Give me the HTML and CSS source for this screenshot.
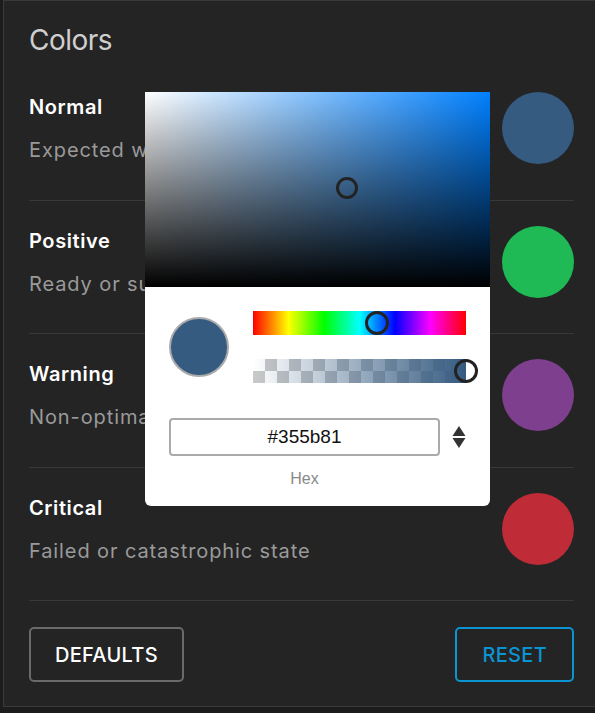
FILE: index.html
```html
<!DOCTYPE html>
<html>
<head>
<meta charset="utf-8">
<link rel="stylesheet" href="styles.css">
</head>
<body>
<div class="stage">
  <div class="dialog">
    <h1 class="title">Colors</h1>
    <div class="row">
      <div class="text">
        <div class="label">Normal</div>
        <div class="desc">Expected working state</div>
      </div>
      <div class="swatch normal"></div>
    </div>
    <div class="row">
      <div class="text">
        <div class="label">Positive</div>
        <div class="desc">Ready or successful state</div>
      </div>
      <div class="swatch positive"></div>
    </div>
    <div class="row">
      <div class="text">
        <div class="label">Warning</div>
        <div class="desc">Non-optimal state</div>
      </div>
      <div class="swatch warning"></div>
    </div>
    <div class="row">
      <div class="text">
        <div class="label">Critical</div>
        <div class="desc">Failed or catastrophic state</div>
      </div>
      <div class="swatch critical"></div>
    </div>
    <div class="footer">
      <button class="btn btn-default">DEFAULTS</button>
      <button class="btn btn-reset">RESET</button>
    </div>
  </div>

  <div class="picker">
    <div class="saturation">
      <div class="sat-pointer"></div>
    </div>
    <div class="picker-body">
      <div class="controls">
        <div class="preview"></div>
        <div class="sliders">
          <div class="hue"><div class="thumb hue-thumb"></div></div>
          <div class="alpha"><div class="alpha-fill"></div><div class="thumb alpha-thumb"></div></div>
        </div>
      </div>
      <div class="fields">
        <div class="field">
          <div class="hex-input">#355b81</div>
          <div class="hex-label">Hex</div>
        </div>
        <svg class="toggle" width="14" height="24" viewBox="0 0 14 24">
          <path d="M7 1 L13.5 11 L0.5 11 Z" fill="#333"/>
          <path d="M0.5 13 L13.5 13 L7 23 Z" fill="#333"/>
        </svg>
      </div>
    </div>
  </div>
</div>
</body>
</html>
```

FILE: styles.css
```css
html, body {
  margin: 0;
  padding: 0;
  overflow: hidden;
}
body {
  width: 595px;
  height: 713px;
  background: #1c1c1c;
  font-family: Inter, "Noto Sans", sans-serif;
}
.stage {
  position: relative;
  width: 595px;
  height: 713px;
  padding-left: 3px;
  box-sizing: border-box;
}
.dialog {
  width: 620px;
  height: 707px;
  box-sizing: border-box;
  background: #242424;
  border: 1px solid #3a3a3a;
  border-right: none;
  border-top-color: #383838;
  padding: 0 49px 0 25px;
}
.title {
  margin: 0;
  padding-top: 22px;
  height: 66px;
  box-sizing: border-box;
  font-size: 28px;
  line-height: 34px;
  font-weight: 400;
  color: #cfcfcf;
  letter-spacing: -0.5px;
}
.row {
  display: flex;
  justify-content: space-between;
  align-items: flex-start;
  padding: 25px 0 35.5px;
  border-bottom: 1px solid #383838;
}
.text {
  padding-top: 3px;
}
.label {
  font-size: 20px;
  line-height: 24px;
  font-weight: 600;
  color: #ffffff;
  letter-spacing: 0.6px;
}
.desc {
  margin-top: 19px;
  font-size: 20px;
  line-height: 24px;
  color: #9a9a9a;
  letter-spacing: 0.9px;
}
.swatch {
  width: 72px;
  height: 72px;
  border-radius: 50%;
}
.normal { background: #355b81; }
.positive { background: #1fba55; }
.warning { background: #7e3f8e; }
.critical { background: #bf2c37; }

.footer {
  display: flex;
  justify-content: space-between;
  padding-top: 26px;
}
.btn {
  height: 55px;
  box-sizing: border-box;
  background: transparent;
  border-radius: 5px;
  font-family: Inter, "Noto Sans", sans-serif;
  font-size: 20px;
  font-weight: 500;
  letter-spacing: 0.3px;
  padding: 0 24px;
  cursor: pointer;
}
.btn-default {
  border: 2px solid #6a6a6a;
  color: #ffffff;
}
.btn-reset {
  border: 2px solid #0a95d2;
  color: #0a95d2;
  padding: 0 25px;
}

/* picker popover */
.picker {
  position: absolute;
  left: 145px;
  top: 92px;
  width: 345px;
  height: 414px;
  background: #ffffff;
  border-radius: 0 0 6px 6px;
  overflow: hidden;
  font-family: "Liberation Sans", Arial, sans-serif;
}
.saturation {
  position: relative;
  height: 195px;
  background:
    linear-gradient(to top, #000, rgba(0,0,0,0)),
    linear-gradient(to right, #fff, #0080ff);
}
.sat-pointer {
  position: absolute;
  left: 191px;
  top: 85px;
  width: 22px;
  height: 22px;
  box-sizing: border-box;
  border: 3px solid #222;
  border-radius: 50%;
}
.picker-body {
  padding: 24px 24px 0 24px;
}
.controls {
  display: flex;
  align-items: center;
  gap: 24px;
}
.preview {
  width: 60px;
  height: 60px;
  box-sizing: border-box;
  border-radius: 50%;
  background: #355b81;
  border: 2px solid #aaaaaa;
}
.sliders {
  display: flex;
  flex-direction: column;
  gap: 24px;
  width: 213px;
}
.hue, .alpha {
  position: relative;
  height: 24px;
}
.hue {
  background: linear-gradient(to right, #f00 0%, #ff0 16.66%, #0f0 33.33%, #0ff 50%, #00f 66.66%, #f0f 83.33%, #f00 100%);
}
.alpha {
  background-color: #fff;
  background-image:
    linear-gradient(45deg, #c9c9c9 25%, transparent 25%, transparent 75%, #c9c9c9 75%),
    linear-gradient(45deg, #c9c9c9 25%, transparent 25%, transparent 75%, #c9c9c9 75%);
  background-size: 24px 24px;
  background-position: 0 0, 12px 12px;
}
.alpha-fill {
  position: absolute;
  inset: 0;
  background: linear-gradient(to right, rgba(53,91,129,0), rgb(53,91,129));
}
.thumb {
  position: absolute;
  top: 0;
  width: 24px;
  height: 24px;
  box-sizing: border-box;
  border: 3px solid #222;
  border-radius: 50%;
}
.hue-thumb {
  left: 112px;
}
.alpha-thumb {
  left: 201px;
}
.fields {
  display: flex;
  align-items: flex-start;
  margin-top: 35px;
  gap: 12px;
}
.field {
  width: 272px;
}
.hex-input {
  height: 38px;
  box-sizing: border-box;
  border: 2px solid #aaaaaa;
  border-radius: 4px;
  text-align: center;
  font-size: 19px;
  line-height: 34px;
  color: #111;
}
.hex-label {
  margin-top: 14px;
  text-align: center;
  font-size: 16px;
  line-height: 18px;
  color: #888;
}
.toggle {
  margin-top: 7px;
}
```
